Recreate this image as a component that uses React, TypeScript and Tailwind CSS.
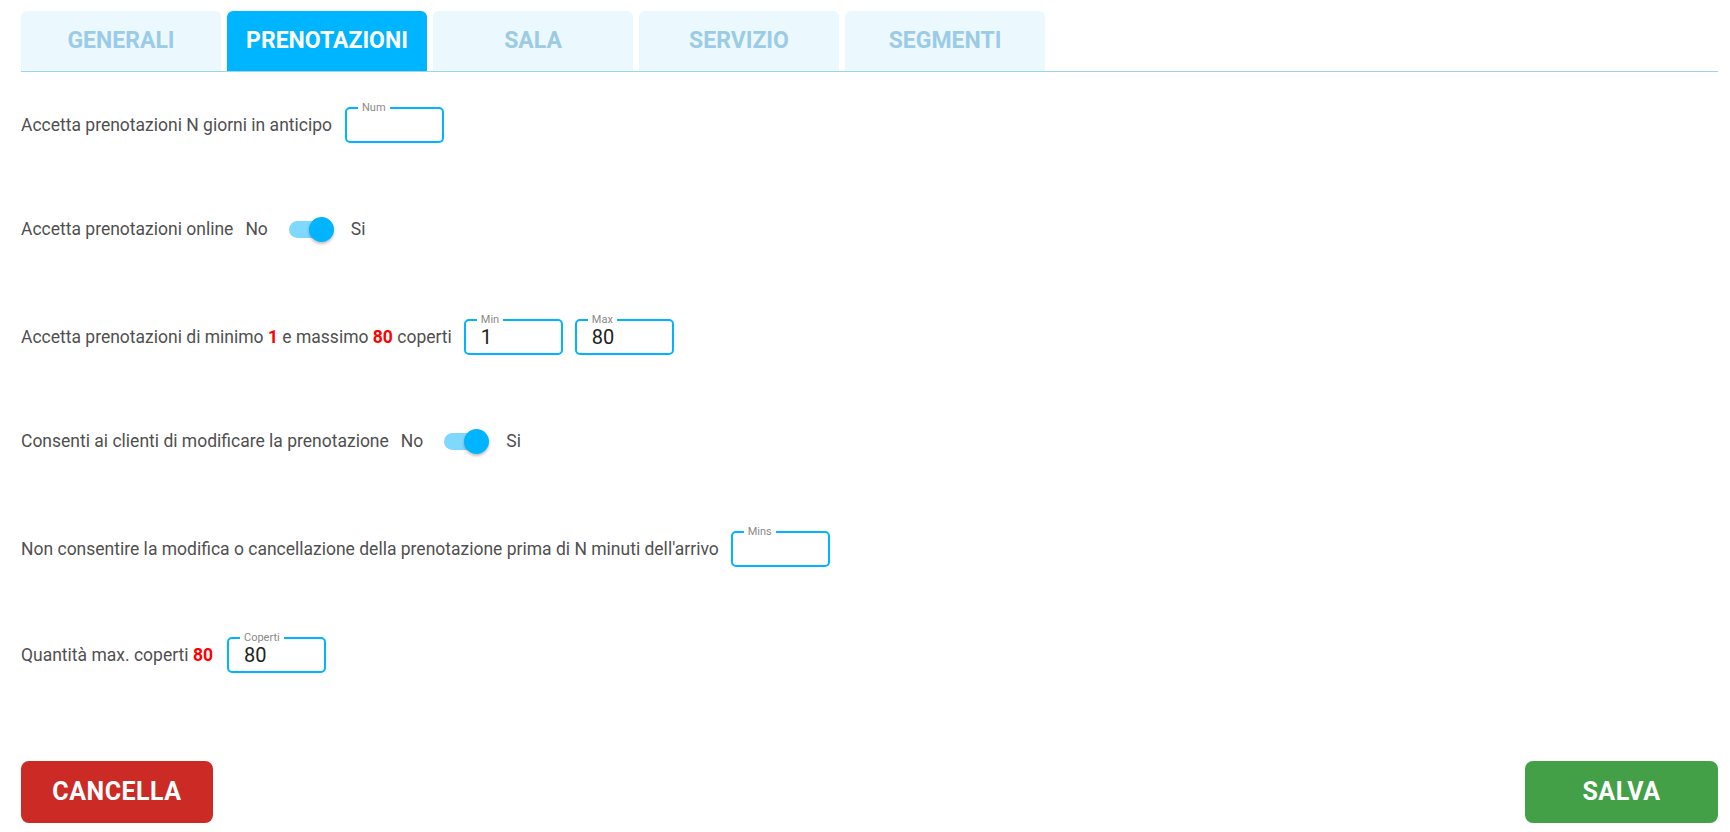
import React from 'react';

const tabs = ['GENERALI', 'PRENOTAZIONI', 'SALA', 'SERVIZIO', 'SEGMENTI'];

function Field({ label, value }: { label: string; value?: string }) {
  return (
    <div className="relative w-[99px] h-[36px] rounded-[5px] border-2 border-[#00b4ff] flex items-center pl-[15px]">
      <span className="absolute -top-[8px] left-[11px] px-[4px] bg-white text-[11px] leading-[14px] text-[#8a8a8a]">
        {label}
      </span>
      <span className="text-[20px] leading-none text-[#222]">{value}</span>
    </div>
  );
}

function Toggle() {
  return (
    <div className="flex items-center">
      <span className="ml-[12px]">No</span>
      <div className="relative ml-[21px] w-[45px] h-[25px] flex items-center">
        <div className="w-[38px] h-[17px] rounded-full bg-[#80d8ff]" />
        <div className="absolute right-0 top-0 w-[25px] h-[25px] rounded-full bg-[#00b4ff] shadow-[0_2px_3px_rgba(0,0,0,0.25)]" />
      </div>
      <span className="ml-[17px]">Si</span>
    </div>
  );
}

function Red({ children }: { children: React.ReactNode }) {
  return <span className="font-bold text-[#ff0000]">{children}</span>;
}

export default function App() {
  return (
    <div className="min-h-screen bg-white pl-[21px] pr-[12px] pt-[11px] font-['Roboto',sans-serif] text-[17.5px] text-[#505050]">
      {/* Tabs */}
      <div className="flex gap-[6px] border-b-[1.5px] border-[#a0d2ea]">
        {tabs.map((t) => (
          <div
            key={t}
            className={
              t === 'PRENOTAZIONI'
                ? 'w-[200px] h-[60px] rounded-t-[6px] bg-[#00b5ff] text-white flex items-center justify-center text-[23px] font-bold'
                : 'w-[200px] h-[60px] rounded-t-[6px] bg-[#ebf8fe] text-[#9ccbe5] flex items-center justify-center text-[23px] font-bold'
            }
          >
            {t}
          </div>
        ))}
      </div>

      {/* Rows */}
      <div className="flex flex-col">
        <div className="h-[106px] flex items-center gap-[13px]">
          <span>Accetta prenotazioni N giorni in anticipo</span>
          <Field label="Num" />
        </div>
        <div className="h-[106px] flex items-center pb-[4px]">
          <span>Accetta prenotazioni online</span>
          <Toggle />
        </div>
        <div className="h-[106px] flex items-center gap-[12px]">
          <span>
            Accetta prenotazioni di minimo <Red>1</Red> e massimo <Red>80</Red> coperti
          </span>
          <Field label="Min" value="1" />
          <Field label="Max" value="80" />
        </div>
        <div className="h-[106px] flex items-center pb-[4px]">
          <span>Consenti ai clienti di modificare la prenotazione</span>
          <Toggle />
        </div>
        <div className="h-[106px] flex items-center gap-[12px]">
          <span>Non consentire la modifica o cancellazione della prenotazione prima di N minuti dell'arrivo</span>
          <Field label="Mins" />
        </div>
        <div className="h-[106px] flex items-center gap-[14px]">
          <span>
            Quantità max. coperti <Red>80</Red>
          </span>
          <Field label="Coperti" value="80" />
        </div>
      </div>

      {/* Actions */}
      <div className="mt-[53px] flex justify-between">
        <button className="w-[192px] h-[62px] rounded-[8px] bg-[#cb2b24] text-white text-[25px] font-bold tracking-[0.5px]">
          CANCELLA
        </button>
        <button className="w-[193px] h-[62px] rounded-[8px] bg-[#43a047] text-white text-[25px] font-bold tracking-[0.5px]">
          SALVA
        </button>
      </div>
    </div>
  );
}
